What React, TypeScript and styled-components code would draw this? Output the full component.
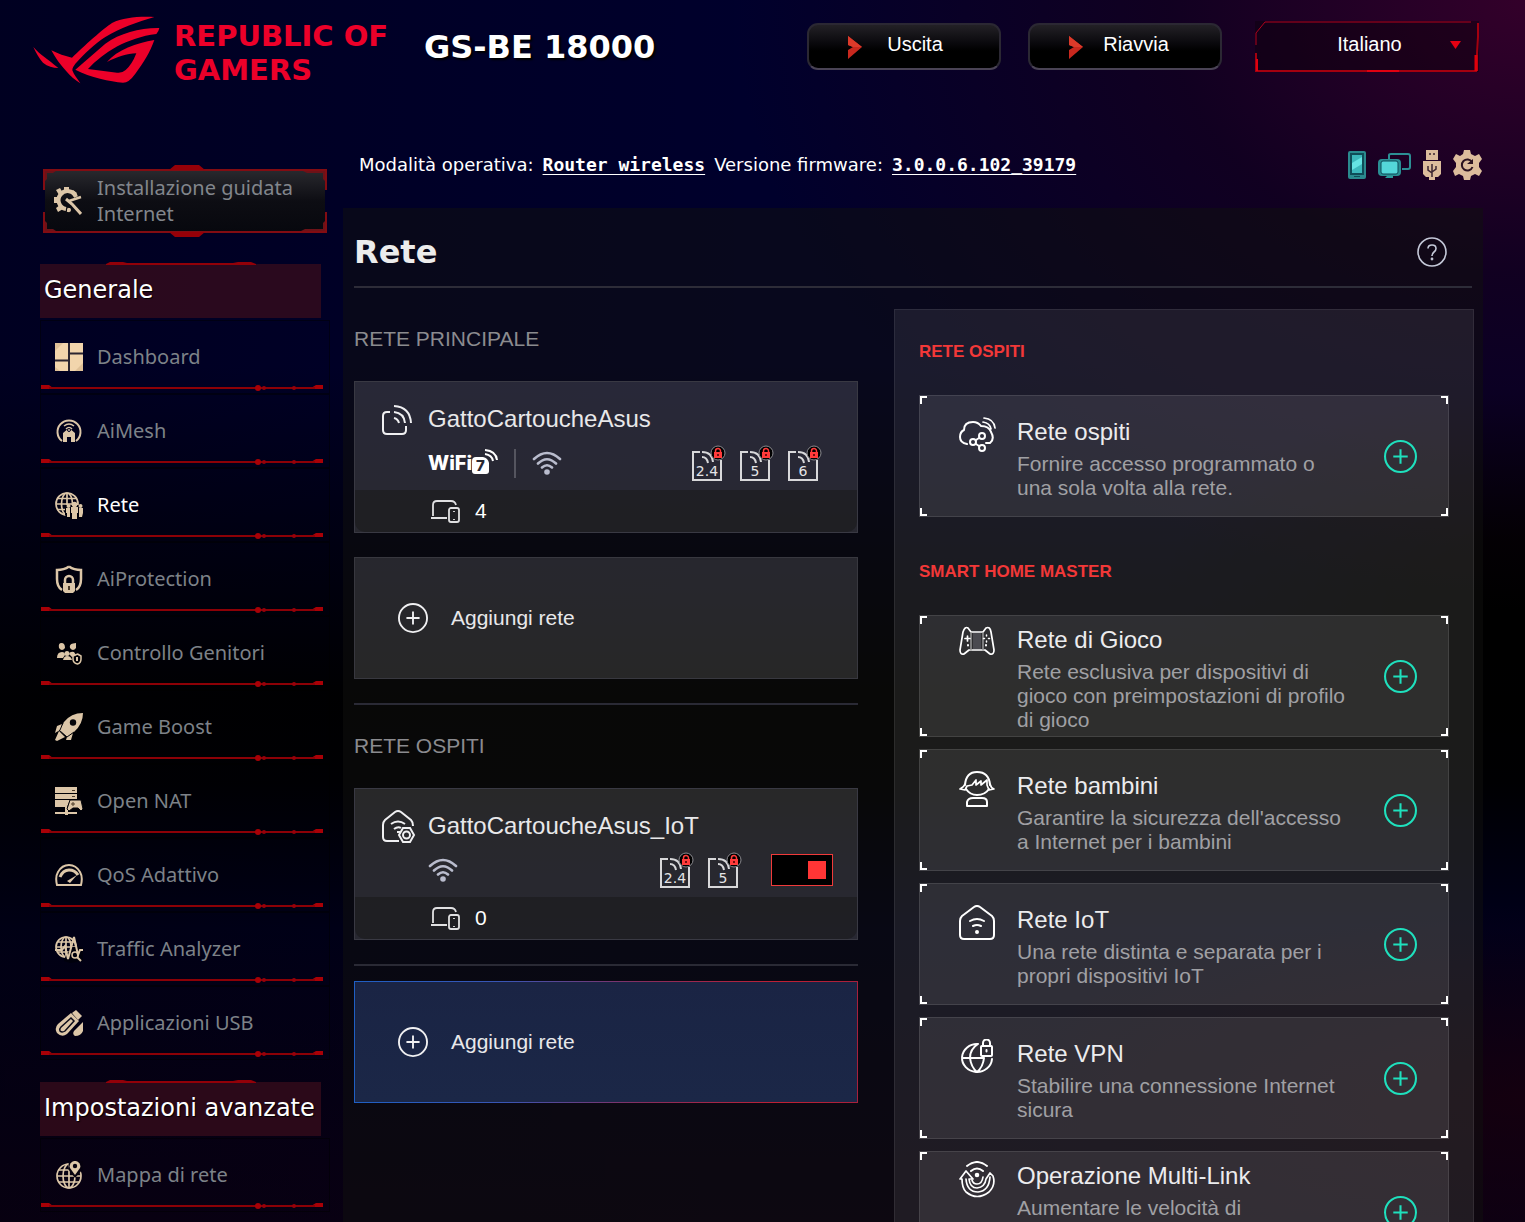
import React from 'react';
import styled, { createGlobalStyle } from 'styled-components';

const sans = `Arial, "Liberation Sans", sans-serif`;
const wide = `Verdana, "DejaVu Sans", sans-serif`;
const menuFont = `"Segoe UI", "Noto Sans", "Open Sans", sans-serif`;
const mono = `"DejaVu Sans Mono", monospace`;

const GlobalStyle = createGlobalStyle`
  *, *::before, *::after { box-sizing: border-box; }
  html { background: #000; }
  body { margin: 0; color: #fff; font-family: ${sans}; font-size: 20px; }
  h1, h2, h3, p, ul { margin: 0; padding: 0; font-weight: normal; }
  ul { list-style: none; }
  svg { display: block; flex: none; }
  button { font: inherit; color: inherit; cursor: pointer; }
`;

/* ---------- page frame ---------- */

const Page = styled.div`
  height: 100vh;
  overflow-y: auto;
  scrollbar-width: none;
  background:
    radial-gradient(ellipse 52% 50% at 100% 0%, rgba(54, 0, 42, 0.95), rgba(24, 0, 28, 0.7) 45%, transparent 100%),
    radial-gradient(ellipse 34% 16% at 100% 90%, rgba(26, 0, 12, 0.7), transparent 100%),
    radial-gradient(ellipse 24% 17% at 100% 49%, #000 30%, transparent 100%),
    linear-gradient(90deg, rgba(0, 0, 8, 0.3), transparent 50%),
    linear-gradient(180deg, #00002c 0%, #00002c 30%, #000016 43%, #000 57%, #000002 64%, #00001a 76%, #060016 90%, #0a0014 100%);
`;

const Header = styled.header`
  display: flex;
  align-items: flex-start;
  padding: 15px 46px 0 33px;
  height: 145px;
`;

const Brand = styled.div`
  display: flex;
  align-items: flex-start;
  gap: 14px;
  color: #ec0029;
`;

const BrandName = styled.p`
  padding-top: 4px;
  width: 236px;
  font: bold 29px/34px ${wide};
  white-space: nowrap;
`;

const Model = styled.h1`
  padding: 14px 0 0 14px;
  font: bold 32px/36px ${wide};
  white-space: nowrap;
  text-shadow: 2px 2px 2px #000;
`;

const HeaderActions = styled.div`
  display: flex;
  gap: 27px;
  margin-left: auto;
  padding-top: 6px;
`;

const PillButton = styled.button`
  display: flex;
  align-items: center;
  width: 194px;
  height: 47px;
  margin-top: 2px;
  padding: 0 31px 0 39px;
  border: 2px solid #2b2833;
  border-bottom-color: #4a4355;
  border-radius: 11px;
  background: linear-gradient(#232126, #0b0a0e 40%, #000 60%);
  span { flex: 1; padding-bottom: 4px; text-align: center; }
`;

const LanguageBox = styled.div`
  position: relative;
  width: 224px;
  height: 51px;
  margin-left: 6px;
  > svg { position: absolute; inset: 0; pointer-events: none; }
`;

const LanguageSelect = styled.select`
  width: 100%;
  height: 100%;
  padding: 0 0 5px 5px;
  border: 0;
  appearance: none;
  background: rgba(10, 0, 8, 0.4);
  color: #fff;
  font: 20px ${sans};
  text-align: center;
  text-align-last: center;
`;

const Body = styled.div`
  display: grid;
  grid-template-columns: 290px minmax(0, 1fr);
  gap: 13px;
  padding: 0 42px 0 40px;
`;

/* ---------- sidebar ---------- */

const Sidebar = styled.nav`
  padding-top: 20px;
`;

const SetupButton = styled.button`
  position: relative;
  display: flex;
  align-items: center;
  gap: 15px;
  width: 284px;
  height: 72px;
  margin: 0 0 27px 3px;
  padding: 0 0 0 11px;
  border: 0;
  background: none;
  color: #82868c;
  font: 20px/26px ${menuFont};
  text-align: left;
  > svg:first-child { position: absolute; inset: 0; }
  > svg:nth-child(2), > span { position: relative; }
`;

const MenuHeading = styled.h2`
  position: relative;
  width: 281px;
  height: 54px;
  margin: 0 0 2px;
  padding-left: 4px;
  background: rgba(58, 12, 28, 0.72);
  font: 24px/52px ${wide};
  white-space: nowrap;
  text-shadow: 1px 1px 1px #000;
  > svg { position: absolute; left: 65px; top: -3px; }
`;

const MenuList = styled.ul`
  margin-bottom: 22px;
`;

const MenuItem = styled.li`
  height: 74px;
  border: 1px solid rgba(0, 0, 0, 0.45);
`;

const MenuLink = styled.a<{ $active?: boolean }>`
  display: flex;
  align-items: center;
  gap: 14px;
  height: 64px;
  padding: 8px 0 0 14px;
  color: ${(p) => (p.$active ? '#fff' : '#7d8288')};
  font: 20px/28px ${menuFont};
  text-decoration: none;
  white-space: nowrap;
`;

/* ---------- main ---------- */

const StatusRow = styled.div`
  display: flex;
  align-items: center;
  gap: 9px;
  height: 40px;
  margin-bottom: 23px;
  padding-left: 16px;
  font: 18px/24px ${wide};
  white-space: nowrap;
  a { color: #fff; font: bold 18px/24px ${mono}; text-decoration: underline; text-underline-offset: 3px; }
`;

const StatusIcons = styled.div`
  display: flex;
  align-items: center;
  gap: 12px;
  margin-left: auto;
  padding-right: 1px;
`;

const Panel = styled.main`
  min-height: 1030px;
  padding: 0 9px 0 11px;
  background: rgba(16, 16, 13, 0.5);
`;

const PanelHeader = styled.div`
  display: flex;
  align-items: center;
  justify-content: space-between;
  height: 80px;
  margin-right: 2px;
  padding: 10px 25px 0 0;
  border-bottom: 2px solid #2d2c38;
`;

const PanelTitle = styled.h2`
  color: #ececec;
  font: bold 32px/40px ${wide};
`;

const PlainButton = styled.button`
  display: block;
  padding: 0;
  border: 0;
  background: none;
`;

const Columns = styled.div`
  display: grid;
  grid-template-columns: 504fr 580fr;
  gap: 36px;
  align-items: start;
`;

const Networks = styled.div`
  margin-top: 10px;
`;

const Heading = styled.h3`
  padding-bottom: 1px;
  color: #8b8b8f;
  font: 21px/82px ${sans};
`;

const Rule = styled.hr`
  height: 2px;
  margin: 24px 0 0;
  border: 0;
  background: #2a2a35;
`;

const NetCard = styled.section`
  border: 1px solid #393943;
  background: rgba(255, 255, 255, 0.135);
`;

const NetTop = styled.div`
  display: grid;
  grid-template-columns: 46px minmax(0, 1fr);
  grid-template-rows: 46px 42px;
  align-items: center;
  padding: 14px 24px 6px 27px;
`;

const NetName = styled.h4`
  margin: 0;
  color: #e8e8ea;
  font: 24px/28px ${sans};
`;

const NetInfo = styled.div`
  grid-column: 2;
  display: flex;
  align-items: center;
  > :first-child { margin-right: auto; }
`;

const Badges = styled.div`
  display: flex;
  align-items: center;
  gap: 16px;
  > i { width: 2px; height: 29px; background: #55555f; }
`;

const WifiSeven = styled.div`
  display: flex;
  align-items: center;
  font: 800 20px/20px Inter, ${sans};
`;

const Bands = styled.div<{ $gapRight: number }>`
  display: flex;
  gap: 14px;
  margin-right: ${(p) => p.$gapRight}px;
`;

const Toggle = styled.input`
  display: grid;
  align-items: center;
  justify-content: end;
  width: 62px;
  height: 32px;
  margin: 0;
  padding: 0 6px;
  border: 1px solid #f03a3a;
  appearance: none;
  background: #000;
  &::before { content: ''; width: 18px; height: 18px; background: #ff3535; }
  &:not(:checked) { justify-content: start; }
`;

const NetClients = styled.div`
  display: flex;
  align-items: center;
  gap: 15px;
  height: 42px;
  padding-left: 75px;
  border-radius: 0 0 10px 10px;
  background: rgba(20, 20, 20, 0.45);
  font-size: 21px;
`;

const AddButton = styled.button<{ $accent?: boolean }>`
  display: flex;
  align-items: center;
  gap: 23px;
  width: 100%;
  height: 122px;
  margin-top: ${(p) => (p.$accent ? 15 : 24)}px;
  padding: 0 0 0 43px;
  border: 1px solid ${(p) => (p.$accent ? 'transparent' : '#38383f')};
  background: ${(p) =>
    p.$accent
      ? `linear-gradient(#1a2444, #1b2747) padding-box,
         linear-gradient(90deg, #1f5fc4, #3a55b4 30%, #8a2c5c 58%, #c01f33 85%, #a8203c) border-box`
      : 'rgba(255, 255, 255, 0.13)'};
  background-origin: ${(p) => (p.$accent ? 'padding-box, border-box' : 'padding-box')};
  color: #e8e8ea;
  font: 21px/26px ${sans};
`;

const Catalog = styled.aside`
  margin-top: 21px;
  padding: 0 25px 25px;
  box-shadow: inset 0 0 0 1px rgba(255, 255, 255, 0.08);
  background: rgba(255, 255, 255, 0.078);
`;

const CatalogTitle = styled.h3`
  color: #f23838;
  font: bold 17px/86px ${sans};
`;

const corner = (x: string, y: string) => `
  linear-gradient(#fff, #fff) ${x} 0 ${y} 0 / 7px 2px no-repeat,
  linear-gradient(#fff, #fff) ${x} 0 ${y} 0 / 2px 8px no-repeat`;

const CatalogCard = styled.article`
  display: flex;
  align-items: center;
  min-height: 122px;
  margin-bottom: 12px;
  padding: 0 31px 0 39px;
  border: 1px solid rgba(255, 255, 255, 0.1);
  background:
    ${corner('left', 'top')}, ${corner('right', 'top')},
    ${corner('left', 'bottom')}, ${corner('right', 'bottom')},
    rgba(255, 255, 255, 0.085);
`;

const CatalogText = styled.div`
  display: flex;
  flex: 1;
  align-items: flex-start;
  gap: 21px;
  padding-right: 31px;
  > svg { margin-top: 5px; }
`;

const CatalogName = styled.h4`
  margin: 0;
  color: #ececee;
  font: 24px/40px ${sans};
`;

const CatalogNote = styled.p<{ $lines: number }>`
  min-height: ${(p) => p.$lines * 24}px;
  color: #a0a0a4;
  font: 21px/24px ${sans};
`;

/* ---------- drawings ---------- */

const RogMark = () => (
  <svg width="127" height="70" viewBox="38 46 381 210" fill="currentColor" aria-hidden="true">
    <path d="M402 52C350 50 310 54 275 70C250 86 190 140 155 174C135 170 112 162 93 152C105 175 120 195 138 215C150 230 165 242 180 251C172 238 160 225 156 212C156 204 160 199 165 192C190 165 225 130 255 112C300 84 350 68 402 52Z" />
    <path d="M417 85C360 84 300 100 255 132L165 210C210 234 270 245 308 249Q326 249 345 222C370 188 388 160 402 121C350 130 290 150 260 187C290 172 320 162 348 161Q335 195 316 211Q305 221 290 219L203 208C250 158 320 114 408 103Q415 96 417 85Z" />
    <path d="M39 142C50 155 62 165 72 172C85 182 98 192 114 205C98 205 82 200 68 189C56 177 48 160 39 142Z" />
  </svg>
);

const RedArrow = () => (
  <svg width="14" height="24" viewBox="0 0 14 24" aria-hidden="true">
    <path d="M0 1L14 12L0 24V15L5 12L0 10Z" fill="#c8281e" />
    <path d="M0 1L14 12H5L0 10Z" fill="#dc3a2a" />
  </svg>
);

const LanguageFrame = () => (
  <svg width="224" height="51" viewBox="0 0 224 51" fill="none" aria-hidden="true">
    <path d="M1 24V12L10 1H216" stroke="#b0001c" />
    <path d="M1 32V50H222" stroke="#a4000f" strokeWidth="2" />
    <path d="M2 38V50M112 50H144" stroke="#e00010" strokeWidth="2" />
    <path d="M223 2V16L222 32V50" stroke="#a4000f" strokeWidth="2" />
    <path d="M221 34V50" stroke="#e0000c" strokeWidth="3" />
    <path d="M195 20H206L200.500 28Z" fill="#e60012" />
  </svg>
);

const SetupFrame = () => (
  <svg width="284" height="72" viewBox="0 0 284 72" fill="none" aria-hidden="true">
    <defs>
      <linearGradient id="setup" x2="0" y2="1">
        <stop stopColor="#29292e" />
        <stop offset=".5" stopColor="#0d0d13" />
        <stop offset="1" stopColor="#07080e" />
      </linearGradient>
    </defs>
    <path d="M2 5H282V67H2Z" fill="url(#setup)" />
    <path d="M1 25V5H283V25M1 47V67H283V47" stroke="#820c12" strokeWidth="2" />
    <path d="M2 16V6H13L10 8H4V14ZM282 16V6H260L264 8H280V14ZM2 56V66H13L10 64H4V58ZM282 56V66H258L262 64H280V58Z" fill="#6c1218" />
    <path d="M126 5L132 0H156L162 5ZM126 67L132 72H156L162 67Z" fill="#960008" />
  </svg>
);

const HeadingAccent = () => (
  <svg width="152" height="5" viewBox="0 0 152 5" aria-hidden="true">
    <path d="M1 3L5 1H18L22 2H128L133 1H146L151 3V4H1Z" fill="#920008" />
  </svg>
);

const MenuDivider = () => (
  <svg width="282" height="6" viewBox="0 0 282 6" aria-hidden="true">
    <path d="M0 0H8L12 3V4H0ZM282 0H275L270 3V4H282Z" fill="#a80006" />
    <path d="M8 3H274" stroke="#8c0006" strokeWidth="2" />
    <circle cx="217" cy="3" r="3" fill="#a80006" />
    <circle cx="223" cy="3" r="2" fill="#98000a" />
    <circle cx="253" cy="3" r="2" fill="#98000a" />
  </svg>
);

const sand = '#dcc6a8';

const MenuSvg = ({ children }: { children: React.ReactNode }) => (
  <svg width="28" height="28" viewBox="0 0 28 28" fill="none" stroke={sand} strokeWidth="2" aria-hidden="true">
    {children}
  </svg>
);

const Globe = ({ cx, cy, r }: { cx: number; cy: number; r: number }) => (
  <g strokeWidth="1.700">
    <circle cx={cx} cy={cy} r={r} />
    <ellipse cx={cx} cy={cy} rx={r / 2} ry={r} />
    <path d={`M${cx} ${cy - r}V${cy + r}M${cx - r} ${cy}H${cx + r}M${cx - r + 1} ${cy - r / 2}H${cx + r - 1}M${cx - r + 1} ${cy + r / 2}H${cx + r - 1}`} />
  </g>
);

const icons: Record<string, React.ReactNode> = {
  setup: (
    <MenuSvg>
      <path d="M22 10A9 9 0 1 0 12 22" strokeWidth="4" />
      <path d="M10 0H15V5H10ZM0 10H5V16H0ZM2 3L6 1L9 6L5 8ZM2 21L6 18L9 22L4 25ZM19 3L23 6L20 10L17 6Z" fill={sand} stroke="none" />
      <path d="M12 12L18 17L27 27" strokeWidth="3" />
      <path d="M15 14L27 10M15 21L14 25" strokeWidth="2.500" />
      <circle cx="15" cy="23" r="2" fill={sand} stroke="none" />
    </MenuSvg>
  ),
  dashboard: (
    <MenuSvg>
      <path d="M0 0H28V28H0Z" fill="#f2d5ac" stroke="none" />
      <path d="M0 0H8L0 8ZM28 12V20L20 28H28ZM0 24L5 28H0Z" fill="#cbab80" stroke="none" opacity=".5" />
      <path d="M14 0V28M0 17.500H14M14 10.500H28" stroke="#2a2430" strokeWidth="2" />
    </MenuSvg>
  ),
  aimesh: (
    <MenuSvg>
      <path d="M7 24A11.500 11.500 0 1 1 21 24" />
      <path d="M8 25V16L14 11L20 16V25H16V20H12V25Z" fill={sand} stroke="none" />
      <path d="M9 9Q14 5 19 9M11 12Q14 9 17 12" strokeWidth="1.500" />
      <circle cx="14" cy="13" r="1.500" fill={sand} stroke="#000020" strokeWidth="1" />
    </MenuSvg>
  ),
  rete: (
    <MenuSvg>
      <Globe cx={12} cy={13} r={11} />
      <path d="M10 14H28V28H13L10 24Z" fill="#00000c" stroke="none" />
      <path d="M16 16H23V22H22V28H17V22H16ZM11 17H15V26H12V22H11ZM24 17H28V22L27 26H24Z" fill={sand} stroke="none" />
      <circle cx="19.500" cy="13.500" r="2.800" fill={sand} stroke="none" />
      <circle cx="13.500" cy="15" r="2" fill={sand} stroke="none" />
      <circle cx="25.500" cy="15" r="2" fill={sand} stroke="none" />
    </MenuSvg>
  ),
  protection: (
    <MenuSvg>
      <path d="M14 1.500Q19 5 26 5V14Q26 22 21 25M14 1.500Q9 5 2 5V14Q2 22 7 25" strokeWidth="2.500" />
      <path d="M10 18V15A4 4 0 0 1 18 15V18" strokeWidth="2.500" />
      <path d="M8 18H20V26L18 28H10L8 26Z" fill={sand} stroke="none" />
      <path d="M14 21V25" stroke="#4a3a28" />
    </MenuSvg>
  ),
  parental: (
    <MenuSvg>
      <g fill={sand} stroke="none">
        <path d="M4 9Q3 4 6.500 4Q10 4 10 9Q7 13 4 9ZM15 9Q14 5 18 4.500L21 4V9Q18 13 15 9Z" />
        <path d="M2 19Q2 13 7 13Q10 13 10 16L8 19ZM14 15Q15 12 19 13L21 16L17 18Z" />
        <circle cx="12" cy="14.500" r="2.500" />
        <path d="M8 21Q9 17 12 17Q16 17 17 21Z" />
      </g>
      <path d="M22.500 15L26 17V20Q26 24 22.500 25Q18 24 18 20V17Z" strokeWidth="1.500" />
      <path d="M22 18V22" />
    </MenuSvg>
  ),
  boost: (
    <MenuSvg>
      <path d="M28 0Q16 0 9 9L4 17L12 24L19 19Q28 11 28 0ZM7 11L2 13L0 20L5 17ZM18 20L16 27L11 27L12 24ZM4 18L10 24L2 28L0 27Z" fill={sand} stroke="none" />
      <circle cx="18" cy="9.500" r="3.200" fill="#05050a" stroke="none" />
      <path d="M4 17L12 24M8 10L5 17M12 24L19 19" stroke="#05050a" strokeWidth="1" />
    </MenuSvg>
  ),
  nat: (
    <MenuSvg>
      <path d="M0 0H22V6H0ZM0 7H22V12H0ZM0 13H15L12 20H0ZM0 25H22V27H0ZM10 20H13V28H10Z" fill={sand} stroke="none" />
      <path d="M15 13H26L28 22L26 24L23 21H18L14 24L12 22Z" fill={sand} stroke="#05050a" strokeWidth="1" />
      <path d="M17 3.500H20M17 9.500H20" stroke="#4a3a28" strokeWidth="1" />
      <path d="M18 15V19M16 17H20" stroke="#4a3a28" strokeWidth="1" />
    </MenuSvg>
  ),
  qos: (
    <MenuSvg>
      <path d="M2 24Q0 16 3 11Q7 4 14 4Q21 4 25 11Q28 16 26 24Z" />
      <path d="M5 16Q8 9 14 9Q20 9 23 14" strokeWidth="3" />
      <path d="M12 20L22 14L15 22Z" fill={sand} stroke="none" />
    </MenuSvg>
  ),
  traffic: (
    <MenuSvg>
      <Globe cx={11} cy={12} r={10} />
      <path d="M9 26L15 28L28 26V12H17L11 20Z" fill="#00000c" stroke="none" />
      <path d="M0 15H7L10 11L13 24L19 2L23 20L25 15H28" strokeWidth="2" />
      <circle cx="20" cy="20" r="3" strokeWidth="1.500" />
      <path d="M22 22L26 26" />
    </MenuSvg>
  ),
  usb: (
    <MenuSvg>
      <path d="M17 4L21 1L27 7L23 11Z" fill={sand} stroke="none" />
      <path d="M16 4L24 12L12 25Q7 29 2 24Q-1 19 3 15Z" fill={sand} stroke="none" />
      <path d="M16 9L19 12L10 22Q7 24 5 22Q4 20 6 18Z" stroke="#0a0a18" strokeWidth="1.500" />
      <path d="M19 22L28 13V22Q26 27 20 27Q17 25 19 22Z" fill={sand} stroke="none" />
    </MenuSvg>
  ),
  map: (
    <MenuSvg>
      <Globe cx={14} cy={15} r={12} />
      <path d="M14 0H28V8L20 17L13 8Z" fill="#05000e" stroke="none" />
      <path d="M20 14L15 7A5.300 5.300 0 1 1 25 7Z" fill={sand} stroke="none" />
      <circle cx="20" cy="5" r="2.200" fill="#05000e" stroke="none" />
    </MenuSvg>
  ),
};

const PhoneIcon = () => (
  <svg width="18" height="28" viewBox="0 0 18 28" aria-hidden="true">
    <rect width="18" height="28" rx="2" fill="#2a8a8e" />
    <rect x="2" y="2" width="14" height="22" fill="#0f4c58" />
    <path d="M4 4H14V22H4Z" fill="#3cb8bc" />
    <path d="M14 6V13L4 19V12Z" fill="#66e4e4" />
    <path d="M6 25.500H12" stroke="#0f4c58" />
  </svg>
);

const MonitorsIcon = () => (
  <svg width="33" height="27" viewBox="0 0 33 27" fill="none" aria-hidden="true">
    <path d="M11 8V3Q11 2 13 2H30Q32 2 32 4V15Q32 17 30 17H24" stroke="#2c8f94" strokeWidth="2" />
    <rect x="0" y="7" width="23" height="17" rx="4" fill="#2a8f94" />
    <rect x="3" y="9" width="17" height="13" rx="2" fill="#54d8da" stroke="#0d4a58" />
    <path d="M9 24H15V26H7Z" fill="#2c9a9c" />
  </svg>
);

const UsbIcon = () => (
  <svg width="18" height="30" viewBox="0 0 18 30" aria-hidden="true">
    <path d="M3 0H15V10H3ZM0 11H18V24L15 27H12V30H6V27H3L0 24Z" fill="#dcbc9c" />
    <path d="M6 4H8M10 4H12M9 14V27M5 16V20L9 23M13 16V19L9 22" stroke="#3a2430" strokeWidth="1.500" fill="none" />
  </svg>
);

const GearIcon = () => (
  <svg width="29" height="30" viewBox="0 0 29 30" fill="none" aria-hidden="true">
    <path d="M11 0H17L18 4L22 6L26 4L29 9L26 13V17L29 21L26 26L22 24L18 26L17 30H11L10 26L6 24L2 26L0 21L3 17V13L0 9L3 4L7 6L10 4Z" fill="#dcbc9c" />
    <path d="M19 12A5.500 5.500 0 1 0 19.500 17" stroke="#2a1220" strokeWidth="2" />
    <path d="M14 14H20V9Z" fill="#2a1220" />
  </svg>
);

const HelpIcon = () => (
  <svg width="30" height="30" viewBox="0 0 30 30" fill="none" stroke="#c4c8d8" strokeWidth="1.600" aria-hidden="true">
    <circle cx="15" cy="15" r="14" />
    <path d="M11 11.500Q11 8 15 8Q19 8 19 11.500Q19 13.500 17 15Q15 16.500 15 19" />
    <circle cx="15" cy="22" r=".6" />
  </svg>
);

const PlusCircle = ({ size, color }: { size: number; color: string }) => (
  <svg width={size} height={size} viewBox="0 0 32 32" fill="none" stroke={color} strokeWidth="2" aria-hidden="true">
    <circle cx="16" cy="16" r="15" />
    <path d="M16 9V23M9 16H23" />
  </svg>
);

const WifiIcon = () => (
  <svg width="30" height="24" viewBox="0 0 30 24" fill="none" stroke="#b9bccd" strokeLinecap="round" aria-hidden="true">
    <path d="M2 8Q15 -4 28 8M6 12.500Q15 4 24 12.500M10 16.500Q15 12 20 16.500" strokeWidth="2.600" />
    <circle cx="15" cy="21" r="2.800" fill="#b9bccd" stroke="none" />
  </svg>
);

const SevenMark = () => (
  <svg width="26" height="28" viewBox="0 0 26 28" fill="none" stroke="#fff" strokeWidth="2" aria-hidden="true">
    <path d="M4 8H11Q16 9 17 14V22Q17 25 14 25H3Q0 25 0 22V12Q0 8 4 8Z" fill="#fff" stroke="none" />
    <text x="4" y="22" fill="#282832" stroke="none" fontFamily="Inter, Arial, sans-serif" fontWeight="800" fontSize="15">7</text>
    <path d="M13 1Q24 2 25 11M13 5Q20 6 21 12" />
  </svg>
);

const MainNetIcon = () => (
  <svg width="31" height="31" viewBox="0 0 31 31" fill="none" stroke="#f0f0f2" strokeWidth="2" aria-hidden="true">
    <path d="M8 8H5Q1 8 1 12V26Q1 30 5 30H20Q24 30 24 26V22" />
    <path d="M12 2Q28 3 29 19M12 8Q22 9 23 19M12 14Q16 15 17 19" />
  </svg>
);

const IotNetIcon = () => (
  <svg width="34" height="34" viewBox="0 0 34 34" fill="none" stroke="#f0f0f2" strokeWidth="2" aria-hidden="true">
    <path d="M17 32H5Q1 32 1 28V16Q1 13 3 11L13 3Q16 1 19 3L29 11Q31 13 31 17" />
    <path d="M9 15Q16 10 23 15M12 20Q16 17 19 19M15 23H18" />
    <path d="M21 19H28L32 26L28 33H21L17 26Z" />
    <circle cx="24.500" cy="26" r="3.500" />
  </svg>
);

const BandIcon = ({ band }: { band: string }) => (
  <svg width="34" height="37" viewBox="0 0 34 37" fill="none" stroke="#d8d8da" strokeWidth="2" aria-label={`${band} GHz`}>
    <path d="M8 7H1V35H29V15" />
    <path d="M10 7Q20 7 21 17M10 12Q15 12 16 18" />
    <text x="15" y="31" textAnchor="middle" fill="#e4e4e6" stroke="none" fontFamily="Verdana, DejaVu Sans, sans-serif" fontSize="14">{band}</text>
    <circle cx="26" cy="8" r="7" fill="#000" stroke="#8a8a90" strokeWidth="1" />
    <path d="M23.500 7V6A2.500 2.500 0 0 1 28.500 6V7" stroke="#ff3b3b" strokeWidth="1.500" />
    <path d="M22 7H30V13H22Z" fill="#ff3b3b" stroke="none" />
    <path d="M26 9V11" stroke="#400" strokeWidth="1.500" />
  </svg>
);

const ClientsIcon = () => (
  <svg width="30" height="23" viewBox="0 0 30 23" fill="none" stroke="#e0e0e2" strokeWidth="1.800" aria-hidden="true">
    <path d="M3 16V5Q3 1 7 1H21Q25 1 26 5M1 18H17" />
    <rect x="19" y="8" width="10" height="14" rx="2" />
    <path d="M24 11V12M24 19V20" />
  </svg>
);

const CatSvg = ({ children }: { children: React.ReactNode }) => (
  <svg width="37" height="37" viewBox="0 0 37 37" fill="none" stroke="#fff" strokeWidth="2" strokeLinejoin="round" strokeLinecap="round" aria-hidden="true">
    {children}
  </svg>
);

const catalogIcons: Record<string, React.ReactNode> = {
  guest: (
    <CatSvg>
      <path d="M8 27Q1 26 1 20Q1 15 5 13Q5 5 14 5Q19 5 22 9M22 9Q30 9 32 15Q36 22 31 26H27" />
      <path d="M25 1Q35 2 36 11M24 5Q31 6 32 12" strokeWidth="1.700" />
      <circle cx="14" cy="25" r="3" />
      <circle cx="23" cy="19" r="3" />
      <circle cx="23" cy="31" r="3" />
      <path d="M17 23L20 21M17 27L20 29" />
    </CatSvg>
  ),
  game: (
    <CatSvg>
      <path d="M4 7Q6 1 9 3L12 7H24L27 3Q31 1 32 7L35 25Q35 30 31 29L26 25H10L5 29Q1 30 1 25Z" strokeWidth="1.700" />
      <path d="M12 8V25M24 8V25" stroke="#999" strokeWidth="1.500" />
      <path d="M14 8H22V24H14Z" fill="#4a4a50" stroke="none" />
      <path d="M8.500 11V16M6 13.500H11" strokeWidth="1.700" />
      <path d="M9 20V20.500M27 20V20.500" />
      <path d="M27.500 10V11M27.500 16V17M24.500 13.500H25.500M29.500 13.500H30.500" strokeWidth="1.500" />
    </CatSvg>
  ),
  kids: (
    <CatSvg>
      <path d="M6 14Q7 1 18 1Q30 1 31 14" />
      <path d="M6 13Q5 16 1 18L6 19L8 15L13 14L17 9V14L22 10V14L28 9V14L30 19L35 18Q32 17 31 13" strokeWidth="1.700" />
      <path d="M7 18Q11 24 18 24Q26 24 30 18" />
      <path d="M8 35V31Q9 27 14 27H23Q28 27 28 31V35Z" />
    </CatSvg>
  ),
  iot: (
    <CatSvg>
      <path d="M3 11L15 2Q18 0 21 2L33 11Q35 13 35 16V30Q35 34 31 34H5Q1 34 1 30V16Q1 13 3 11Z" />
      <path d="M11 16Q18 12 25 16M14 21Q18 19 22 21" />
      <circle cx="18" cy="27" r="1" fill="#fff" />
    </CatSvg>
  ),
  vpn: (
    <CatSvg>
      <path d="M19 5A15 14 0 1 0 33 20M19 5Q11 10 11 19Q12 28 18 33M4 19H25M18 33Q24 28 25 19" />
      <rect x="22" y="7" width="11" height="10" rx="1" />
      <path d="M24 7V4A3 3 0 0 1 31 4V7M27.500 11V12.500" />
    </CatSvg>
  ),
  multilink: (
    <CatSvg>
      <path d="M8 5Q18 -3 28 5M12 10Q18 5 24 10" />
      <circle cx="18" cy="14" r="1.300" fill="#fff" />
      <path d="M1 18L7 10L14 18H10Q11 27 18 27Q26 26 27 18L31 12L34 15Q37 24 30 31Q18 40 7 31Q3 27 3 18Z" strokeWidth="1.700" />
      <path d="M7 18Q8 31 19 31Q30 30 31 16M13 19Q14 23 18 23Q23 23 24 16" strokeWidth="1.700" />
    </CatSvg>
  ),
};

/* ---------- data ---------- */

type MenuEntry = { icon: string; label: string; active?: boolean };

const general: MenuEntry[] = [
  { icon: 'dashboard', label: 'Dashboard' },
  { icon: 'aimesh', label: 'AiMesh' },
  { icon: 'rete', label: 'Rete', active: true },
  { icon: 'protection', label: 'AiProtection' },
  { icon: 'parental', label: 'Controllo Genitori' },
  { icon: 'boost', label: 'Game Boost' },
  { icon: 'nat', label: 'Open NAT' },
  { icon: 'qos', label: 'QoS Adattivo' },
  { icon: 'traffic', label: 'Traffic Analyzer' },
  { icon: 'usb', label: 'Applicazioni USB' },
];
const advanced: MenuEntry[] = [{ icon: 'map', label: 'Mappa di rete' }];

const smartHome = [
  { icon: 'game', name: 'Rete di Gioco', note: 'Rete esclusiva per dispositivi di gioco con preimpostazioni di profilo di gioco', lines: 3 },
  { icon: 'kids', name: 'Rete bambini', note: "Garantire la sicurezza dell'accesso a Internet per i bambini", lines: 2 },
  { icon: 'iot', name: 'Rete IoT', note: 'Una rete distinta e separata per i propri dispositivi IoT', lines: 2 },
  { icon: 'vpn', name: 'Rete VPN', note: 'Stabilire una connessione Internet sicura', lines: 2 },
  { icon: 'multilink', name: 'Operazione Multi-Link', note: 'Aumentare le velocità di', lines: 3 },
];

const Menu = ({ title, items }: { title: string; items: MenuEntry[] }) => (
  <>
    <MenuHeading>
      <HeadingAccent />
      {title}
    </MenuHeading>
    <MenuList>
      {items.map((it) => (
        <MenuItem key={it.label}>
          <MenuLink href="#" $active={it.active} aria-current={it.active ? 'page' : undefined}>
            {icons[it.icon]}
            {it.label}
          </MenuLink>
          <MenuDivider />
        </MenuItem>
      ))}
    </MenuList>
  </>
);

const CatalogEntry = ({ icon, name, note, lines }: { icon: string; name: string; note: string; lines: number }) => (
  <CatalogCard>
    <CatalogText>
      {catalogIcons[icon]}
      <div>
        <CatalogName>{name}</CatalogName>
        <CatalogNote $lines={lines}>{note}</CatalogNote>
      </div>
    </CatalogText>
    <PlainButton aria-label={name}>
      <PlusCircle size={33} color="#1fe0bd" />
    </PlainButton>
  </CatalogCard>
);

export default function App() {
  return (
    <Page>
      <GlobalStyle />
      <Header>
        <Brand>
          <RogMark />
          <BrandName>
            REPUBLIC OF
            <br />
            GAMERS
          </BrandName>
        </Brand>
        <Model>GS-BE 18000</Model>
        <HeaderActions>
          <PillButton>
            <RedArrow />
            <span>Uscita</span>
          </PillButton>
          <PillButton>
            <RedArrow />
            <span>Riavvia</span>
          </PillButton>
          <LanguageBox>
            <LanguageSelect aria-label="Italiano" defaultValue="it">
              <option value="it">Italiano</option>
            </LanguageSelect>
            <LanguageFrame />
          </LanguageBox>
        </HeaderActions>
      </Header>

      <Body>
        <Sidebar>
          <SetupButton>
            <SetupFrame />
            {icons.setup}
            <span>
              Installazione guidata
              <br />
              Internet
            </span>
          </SetupButton>
          <Menu title="Generale" items={general} />
          <Menu title="Impostazioni avanzate" items={advanced} />
        </Sidebar>

        <div>
          <StatusRow>
            <span>Modalità operativa:</span>
            <a href="#">Router wireless</a>
            <span>Versione firmware:</span>
            <a href="#">3.0.0.6.102_39179</a>
            <StatusIcons>
              <PhoneIcon />
              <MonitorsIcon />
              <UsbIcon />
              <GearIcon />
            </StatusIcons>
          </StatusRow>

          <Panel>
            <PanelHeader>
              <PanelTitle>Rete</PanelTitle>
              <PlainButton aria-label="?">
                <HelpIcon />
              </PlainButton>
            </PanelHeader>

            <Columns>
              <Networks>
                <Heading>RETE PRINCIPALE</Heading>
                <NetCard>
                  <NetTop>
                    <MainNetIcon />
                    <NetName>GattoCartoucheAsus</NetName>
                    <NetInfo>
                      <Badges>
                        <WifiSeven>
                          WiFi
                          <SevenMark />
                        </WifiSeven>
                        <i />
                        <WifiIcon />
                      </Badges>
                      <Bands $gapRight={11}>
                        <BandIcon band="2.4" />
                        <BandIcon band="5" />
                        <BandIcon band="6" />
                      </Bands>
                    </NetInfo>
                  </NetTop>
                  <NetClients>
                    <ClientsIcon />
                    <span>4</span>
                  </NetClients>
                </NetCard>
                <AddButton>
                  <PlusCircle size={30} color="#f0f0f2" />
                  Aggiungi rete
                </AddButton>
                <Rule />

                <Heading>RETE OSPITI</Heading>
                <NetCard>
                  <NetTop>
                    <IotNetIcon />
                    <NetName>GattoCartoucheAsus_IoT</NetName>
                    <NetInfo>
                      <WifiIcon />
                      <Bands $gapRight={29}>
                        <BandIcon band="2.4" />
                        <BandIcon band="5" />
                      </Bands>
                      <Toggle type="checkbox" defaultChecked aria-label="GattoCartoucheAsus_IoT" />
                    </NetInfo>
                  </NetTop>
                  <NetClients>
                    <ClientsIcon />
                    <span>0</span>
                  </NetClients>
                </NetCard>
                <Rule />
                <AddButton $accent>
                  <PlusCircle size={30} color="#f0f0f2" />
                  Aggiungi rete
                </AddButton>
              </Networks>

              <Catalog>
                <CatalogTitle>RETE OSPITI</CatalogTitle>
                <CatalogEntry icon="guest" name="Rete ospiti" note="Fornire accesso programmato o una sola volta alla rete." lines={2} />
                <CatalogTitle>SMART HOME MASTER</CatalogTitle>
                {smartHome.map((s) => (
                  <CatalogEntry key={s.name} {...s} />
                ))}
              </Catalog>
            </Columns>
          </Panel>
        </div>
      </Body>
    </Page>
  );
}
